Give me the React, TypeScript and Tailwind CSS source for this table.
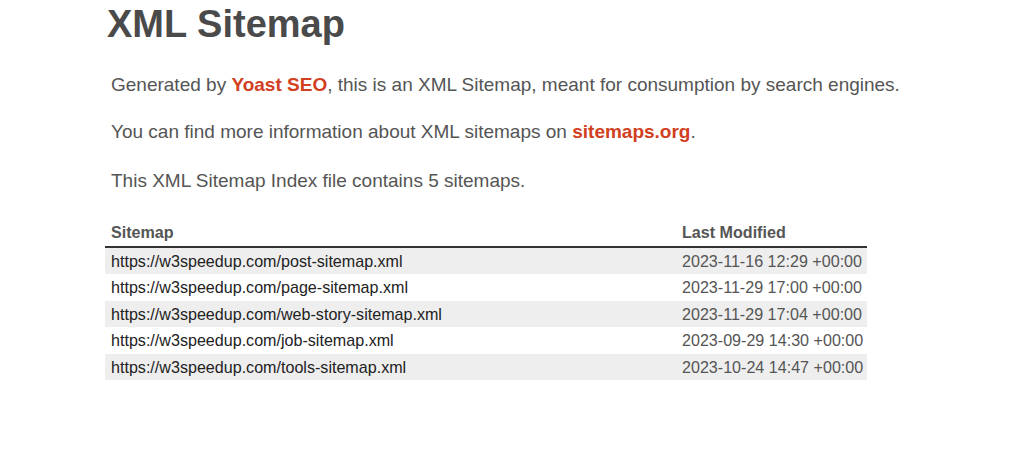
import React from "react";

// Lignes du tableau des sitemaps
const sitemaps = [
  { url: "https://w3speedup.com/post-sitemap.xml", date: "2023-11-16 12:29 +00:00" },
  { url: "https://w3speedup.com/page-sitemap.xml", date: "2023-11-29 17:00 +00:00" },
  { url: "https://w3speedup.com/web-story-sitemap.xml", date: "2023-11-29 17:04 +00:00" },
  { url: "https://w3speedup.com/job-sitemap.xml", date: "2023-09-29 14:30 +00:00" },
  { url: "https://w3speedup.com/tools-sitemap.xml", date: "2023-10-24 14:47 +00:00" },
];

export default function App() {
  return (
    <div className="min-h-[467px] bg-white pl-[105px] font-['Liberation_Sans',Arial,sans-serif] text-[#555]">
      {/* Titre */}
      <h1 className="pt-[5px] pl-[2px] text-[38px] font-bold leading-[38px] text-[#4a4a4a]">
        XML Sitemap
      </h1>

      {/* Introduction */}
      <div className="mt-[29px] pl-[6px] text-[19px] leading-[25px]">
        <p>
          Generated by{" "}
          <a href="#" className="font-bold text-[#d1401f]">
            Yoast SEO
          </a>
          , this is an XML Sitemap, meant for consumption by search engines.
        </p>
        <p className="mt-[21.5px]">
          You can find more information about XML sitemaps on{" "}
          <a href="#" className="font-bold text-[#d1401f]">
            sitemaps.org
          </a>
          .
        </p>
        <p className="mt-[24px]">This XML Sitemap Index file contains 5 sitemaps.</p>
      </div>

      {/* Tableau */}
      <table className="mt-[29px] w-[762px] border-collapse text-[16.1px]">
        <thead>
          <tr className="border-b-2 border-[#333]">
            <th className="w-[577px] pl-[6px] pb-[4px] text-left font-bold leading-[20px]">Sitemap</th>
            <th className="pb-[4px] text-left font-bold leading-[20px]">Last Modified</th>
          </tr>
        </thead>
        <tbody>
          {sitemaps.map((s, i) => (
            <tr key={s.url} className={i % 2 === 0 ? "bg-[#eeeeee]" : "bg-white"}>
              <td className="h-[26.5px] pl-[6px] leading-[26.5px] text-[#222]">
                <a href="#">{s.url}</a>
              </td>
              <td className="h-[26.5px] leading-[26.5px]">{s.date}</td>
            </tr>
          ))}
        </tbody>
      </table>
    </div>
  );
}
